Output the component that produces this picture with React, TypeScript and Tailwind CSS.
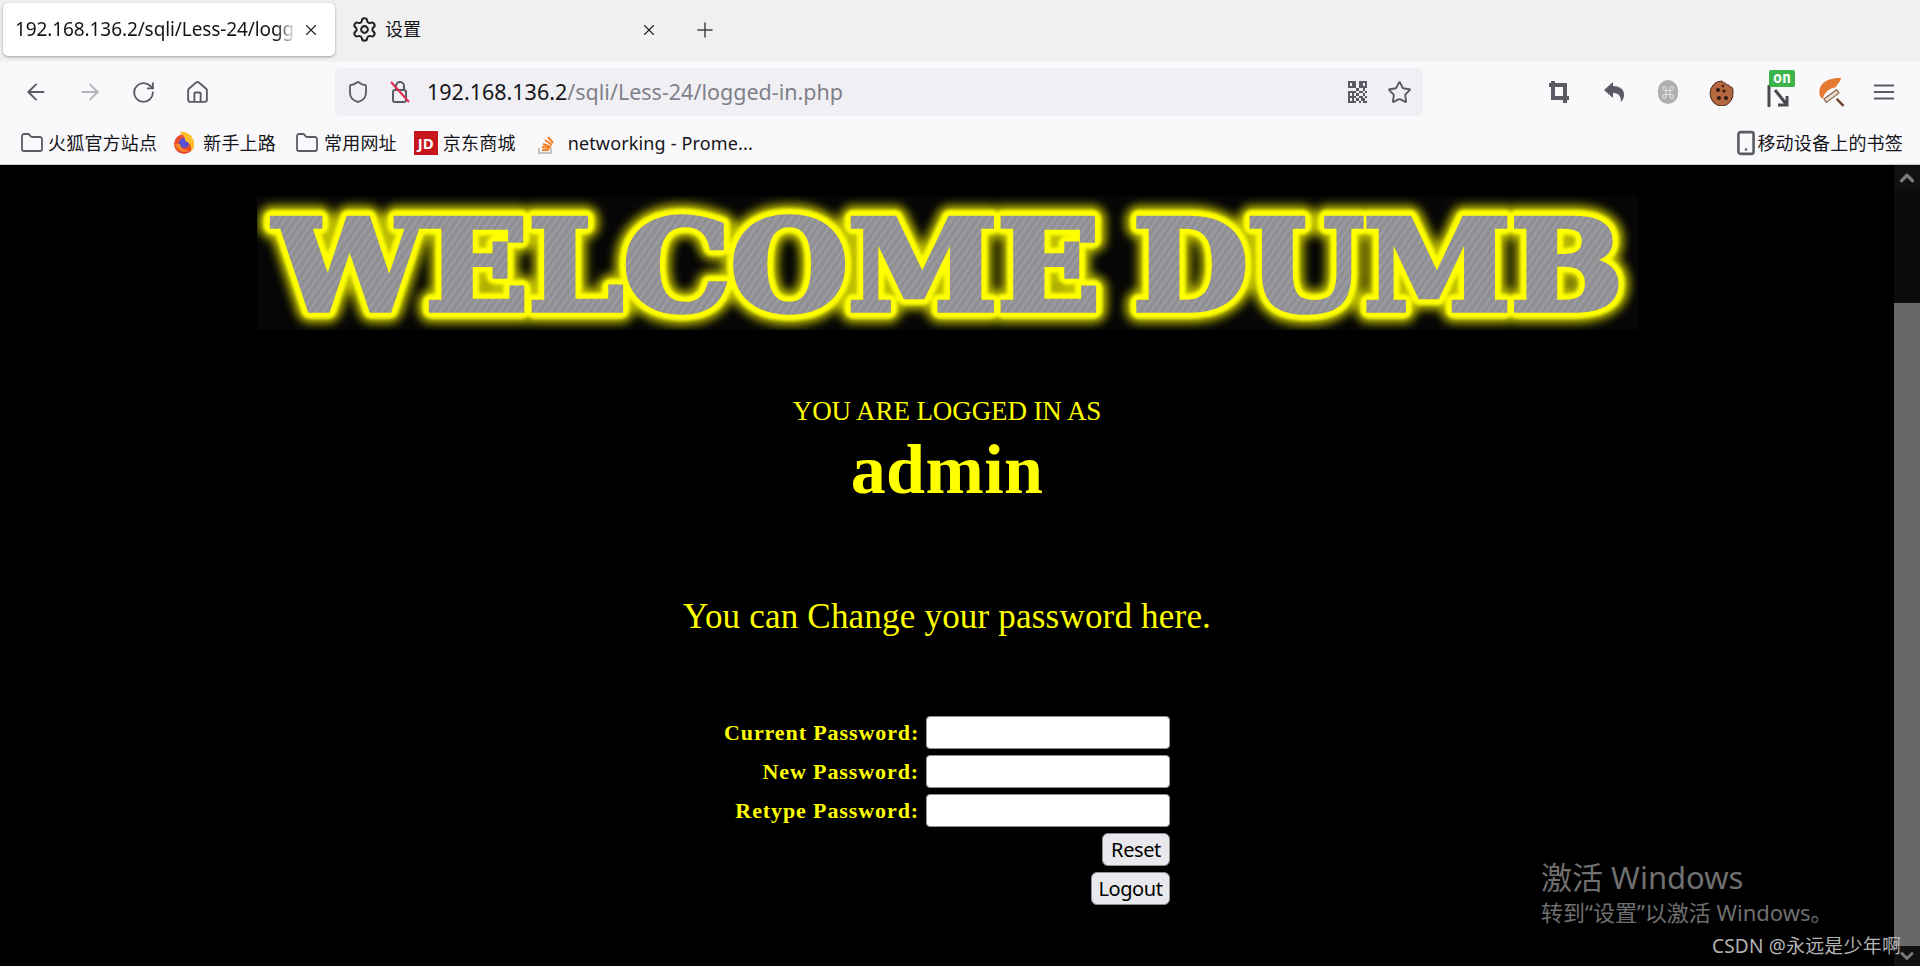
import React from "react";
import { ArrowLeft, ArrowRight, RotateCw, Home, Shield, Star, Settings, X, Plus, Folder, Smartphone, ChevronUp, ChevronDown } from "lucide-react";

const cjk = "font-['Noto_Sans','Noto_Sans_CJK_SC',sans-serif]";
const serif = "font-['Liberation_Serif',serif]";

function Lock() {
  return (
    <svg width="24" height="26" viewBox="0 0 24 26" fill="none">
      <rect x="5" y="11" width="13" height="12" rx="2" stroke="#5b5b66" strokeWidth="2" />
      <path d="M8 11V7a4 4 0 0 1 8 0v4" stroke="#5b5b66" strokeWidth="2" />
      <path d="M3 3l18 20" stroke="#e22850" strokeWidth="2" />
    </svg>
  );
}

function Qr() {
  const cells = [
    "111101111",
    "101101101",
    "111101111",
    "000010010",
    "111101101",
    "101010010",
    "111101101",
    "101010110",
    "111101011",
  ];
  return (
    <svg width="19" height="22" viewBox="0 0 9 9" shapeRendering="crispEdges" preserveAspectRatio="none">
      {cells.flatMap((r, y) =>
        r.split("").map((c, x) => (c === "1" ? <rect key={`${x}-${y}`} x={x} y={y} width="1" height="1" fill="#5b5b66" /> : null))
      )}
    </svg>
  );
}

function Firefox() {
  return (
    <svg width="22" height="24" viewBox="0 0 22 24">
      <circle cx="11" cy="13" r="10" fill="#ea4d2c" />
      <circle cx="11" cy="12" r="5" fill="#5a4fd0" />
      <path d="M7 1c7-1 14 4 14 12 0 3-1 6-3 8 1-5-1-10-6-11 1-2-1-5-5-9z" fill="#ffc02a" />
      <path d="M2 13c2 7 9 10 15 6-5 1-9-1-10-6z" fill="#f9892a" />
    </svg>
  );
}

function StackIcon() {
  return (
    <svg width="20" height="24" viewBox="0 0 20 24" fill="none">
      <path d="M3 17v5h12v-5" stroke="#c4c4c4" strokeWidth="2" />
      <path d="M6 19h7M6 16l8 1M7 13l8 3M9 9l7 5M12 6l5 6" stroke="#f48024" strokeWidth="2" />
    </svg>
  );
}

function Cookie() {
  return (
    <svg width="26" height="28" viewBox="0 0 26 28">
      <path d="M13 3c1 1 2 2 3 2s1 2 3 2 1 2 3 2 2 3 2 5a11.500 12.500 0 1 1-11-11z" fill="#b5683f" stroke="#4a2c18" strokeWidth="1" />
      <circle cx="9" cy="12" r="2" fill="#2a1a10" />
      <circle cx="15" cy="13" r="1.6" fill="#2a1a10" />
      <circle cx="10" cy="20" r="2" fill="#2a1a10" />
      <circle cx="17" cy="20" r="2" fill="#2a1a10" />
      <circle cx="14" cy="8" r="1.2" fill="#2a1a10" />
    </svg>
  );
}

function Hotkey() {
  return (
    <div className="flex h-[24px] w-[20px] items-center justify-center rounded-full bg-[#b0b0b0] text-[13px] leading-none text-white">⌘</div>
  );
}

function CropIcon() {
  return (
    <svg width="20" height="22" viewBox="0 0 20 22" fill="none">
      <path d="M4 0v17h16M0 4h16v18" stroke="#5b5b66" strokeWidth="4" />
    </svg>
  );
}

function UndoIcon() {
  return (
    <svg width="20" height="22" viewBox="0 0 20 22">
      <path d="M9 1L0 9l9 8v-5c5 0 8 2 8 9 3-3 3-6 3-8 0-5-5-8-11-8z" fill="#5b5b66" />
    </svg>
  );
}

function OnBadge() {
  return (
    <div className="relative h-[32px] w-[28px]">
      <svg width="28" height="32" viewBox="0 0 28 32" fill="none" className="absolute left-0 top-0">
        <path d="M2 9v22" stroke="#4a4a4f" strokeWidth="3" />
        <path d="M8 14l12 15M20 20v9h-9" stroke="#4a4a4f" strokeWidth="3" />
      </svg>
      <div className="absolute left-[2px] top-[-6px] flex h-[17px] w-[26px] items-center justify-center rounded-[2px] bg-[#3cb44a] font-['DejaVu_Sans_Mono',monospace] text-[15px] font-bold leading-none text-white">on</div>
    </div>
  );
}

function Roller() {
  return (
    <svg width="28" height="30" viewBox="0 0 22 26" fill="none">
      <path d="M19 1C10 0 0 4 0 13c0 3 1 5 3 6 1-5 6-10 11-10 2-3 4-5 5-8z" fill="#e67a32" />
      <path d="M4 19l11-8 2 3-11 8z" fill="#e8dccf" stroke="#8a6a50" />
      <path d="M15 19l6 6" stroke="#6b3f2a" strokeWidth="2" />
    </svg>
  );
}

function Hamburger() {
  return (
    <svg width="20" height="16" viewBox="0 0 20 16">
      <path d="M0 1.500h20M0 8h20M0 14.500h20" stroke="#5b5b66" strokeWidth="2" />
    </svg>
  );
}

function Logo() {
  const common = {
    fontFamily: "'DejaVu Serif', serif",
    fontWeight: 700,
    fontSize: 125,
    lengthAdjust: "spacingAndGlyphs" as const,
  };
  const word = (t: string, x: number, w: number) => (
    <g key={t}>
      <text {...common} x={x} y="114" textLength={w} fill="#ffff00" stroke="#ffff00" strokeWidth="26" strokeLinejoin="round" filter="url(#glow)" opacity="0.75">{t}</text>
      <text {...common} x={x} y="114" textLength={w} fill="#ffff00" stroke="#ffff00" strokeWidth="17" strokeLinejoin="round" filter="url(#inner)">{t}</text>
      <text {...common} x={x} y="114" textLength={w} fill="url(#brushed)" stroke="url(#brushed)" strokeWidth="5.500" strokeLinejoin="miter">{t}</text>
    </g>
  );
  return (
    <svg width="1381" height="134" viewBox="0 0 1381 134" className="block bg-[#060606]">
      <defs>
        <filter id="glow" x="-5%" y="-30%" width="110%" height="160%">
          <feGaussianBlur stdDeviation="5" />
        </filter>
        <filter id="inner" x="-5%" y="-30%" width="110%" height="160%">
          <feGaussianBlur stdDeviation="1.5" />
        </filter>
        <pattern id="brushed" width="6" height="6" patternUnits="userSpaceOnUse" patternTransform="rotate(35)">
          <rect width="6" height="6" fill="#949498" />
          <rect width="1" height="6" fill="#a0a0a4" />
          <rect x="3" width="1" height="6" fill="#8a8a8e" />
        </pattern>
      </defs>
      {word("WELCOME", 17, 826)}
      {word("DUMB", 876, 490)}
    </svg>
  );
}

function Row({ label }: { label: string }) {
  return (
    <div className="flex h-[39px] items-start justify-end">
      <label className={`${serif} mr-[7px] whitespace-nowrap pt-[1px] text-[22px] font-bold leading-[32px] tracking-[0.9px] text-[#ffff00]`}>{label}</label>
      <input type="password" aria-label={label} className="h-[33px] w-[244px] rounded-[4px] border border-[#8f8f9d] bg-white" />
    </div>
  );
}

function Btn({ children, w }: { children: React.ReactNode; w: string }) {
  return (
    <div className="flex h-[39px] items-start justify-end">
      <button className={`${w} ${cjk} h-[33px] rounded-[6px] border border-[#8f8f9d] bg-[#e9e9ed] text-[20px] leading-none tracking-[-0.4px] text-black`}>{children}</button>
    </div>
  );
}

export default function App() {
  const ic = "#5b5b66";
  return (
    <div className={`${cjk} relative flex h-[966px] w-[1920px] flex-col overflow-hidden bg-black`}>
      {/* Tab strip */}
      <div className="flex h-[62px] items-start bg-[#f0f0f0] pl-[3px] pt-[3px]">
        <div className="flex h-[53px] w-[332px] items-center rounded-[5px] bg-white pl-[12px] shadow-[0_1px_3px_rgba(0,0,0,0.35)]">
          <div className="w-[281px] overflow-hidden whitespace-nowrap text-[19px] tracking-[-0.1px] text-[#15141a] [mask-image:linear-gradient(to_right,black_93%,transparent)]">192.168.136.2/sqli/Less-24/logged-in.php</div>
          <X size={18} color="#222" strokeWidth={1.5} className="ml-[6px]" />
        </div>
        <div className="flex h-[53px] w-[341px] items-center pl-[16px]">
          <Settings size={27} color="#222" strokeWidth={1.8} />
          <span className="ml-[7px] text-[18px] text-[#15141a]">设置</span>
          <X size={18} color="#222" strokeWidth={1.5} className="ml-[219px]" />
        </div>
        <div className="flex h-[53px] items-center pl-[17px]">
          <Plus size={24} color="#444" strokeWidth={1.5} />
        </div>
      </div>

      {/* Nav bar */}
      <div className="flex h-[60px] items-center bg-[#f9f9fb] pl-[23px]">
        <ArrowLeft size={26} color={ic} strokeWidth={1.8} />
        <ArrowRight size={26} color="#b4b4ba" strokeWidth={1.8} className="ml-[28px]" />
        <RotateCw size={25} color={ic} strokeWidth={1.8} className="ml-[28px]" />
        <Home size={25} color={ic} strokeWidth={1.8} className="ml-[29px]" />
        <div className="ml-[125px] flex h-[48px] w-[1088px] items-center rounded-[6px] bg-[#f0f0f4] pl-[11px] pr-[11px]">
          <Shield size={24} color={ic} strokeWidth={1.8} />
          <div className="ml-[18px]"><Lock /></div>
          <div className="ml-[15px] text-[21.5px] text-[#15141a]">192.168.136.2<span className="text-[#80808a]">/sqli/Less-24/logged-in.php</span></div>
          <div className="ml-auto mr-[20px]"><Qr /></div>
          <Star size={25} color={ic} strokeWidth={1.8} />
        </div>
        <div className="ml-[126px] flex h-[60px] items-center">
          <CropIcon />
          <div className="ml-[35px]"><UndoIcon /></div>
          <div className="ml-[34px]"><Hotkey /></div>
          <div className="ml-[31px]"><Cookie /></div>
          <div className="ml-[32px]"><OnBadge /></div>
          <div className="ml-[23px]"><Roller /></div>
          <div className="ml-[28px]"><Hamburger /></div>
        </div>
      </div>

      {/* Bookmarks */}
      <div className="flex h-[43px] items-center border-b border-[#c8c8cc] bg-[#f9f9fb] pl-[20px] text-[18px] tracking-[0.2px] text-[#15141a]">
        <Folder size={24} color={ic} strokeWidth={1.8} />
        <span className="ml-[4px]">火狐官方站点</span>
        <div className="ml-[16px]"><Firefox /></div>
        <span className="ml-[8px]">新手上路</span>
        <Folder size={24} color={ic} strokeWidth={1.8} className="ml-[19px]" />
        <span className="ml-[5px]">常用网址</span>
        <div className="ml-[17px] flex h-[24px] w-[24px] items-center justify-center bg-[#c4161c] text-[15px] font-bold leading-none text-white">JD</div>
        <span className="ml-[5px]">京东商城</span>
        <div className="ml-[20px]"><StackIcon /></div>
        <span className="ml-[12px] text-[18px] tracking-[0.15px]">networking - Prome...</span>
        <div className="ml-auto flex items-center pr-[17px]">
          <Smartphone size={26} color={ic} strokeWidth={2.4} className="mr-[-2px]" />
          <span>移动设备上的书签</span>
        </div>
      </div>

      {/* Page */}
      <div className="flex min-h-0 flex-1">
        <main className="flex w-[1894px] flex-col items-center pt-[31px]">
          <Logo />
          <div className={`${serif} mt-[66px] text-[27px] leading-[30px] tracking-[-0.1px] text-[#ffff00]`}>YOU ARE LOGGED IN AS</div>
          <div className={`${serif} mt-[4px] text-[70px] font-bold leading-[80px] tracking-[0.4px] text-[#ffff00]`}>admin</div>
          <div className={`${serif} mt-[87px] text-[35px] leading-[40px] tracking-[0.2px] text-[#ffff00]`}>You can Change your password here.</div>
          <div className="mt-[79px] w-[446px] self-center">
            <Row label="Current Password:" />
            <Row label="New Password:" />
            <Row label="Retype Password:" />
            <Btn w="w-[68px]">Reset</Btn>
            <Btn w="w-[79px]">Logout</Btn>
          </div>
        </main>
        <aside className="flex w-[26px] flex-col bg-[#0b0b0d]">
          <div className="flex h-[26px] items-center justify-center bg-[#111113]"><ChevronUp size={22} color="#7a7a7a" strokeWidth={3.5} /></div>
          <div className="mt-[112px] h-[645px] bg-[#686868]" />
          <div className="flex flex-1 items-center justify-center bg-[#111113]"><ChevronDown size={20} color="#7a7a7a" strokeWidth={3.5} /></div>
        </aside>
      </div>

      {/* Overlays */}
      <div className="absolute left-[1541px] top-[857px] text-[#6f6f6f]">
        <div className="text-[31px] leading-[40px]">激活 Windows</div>
        <div className="text-[22px] leading-[30px]">转到“设置”以激活 Windows。</div>
      </div>
      <div className="absolute left-[1712px] top-[932px] text-[19px] leading-[28px] tracking-[0.2px] text-[#b4b4b4]">CSDN @永远是少年啊</div>
    </div>
  );
}
